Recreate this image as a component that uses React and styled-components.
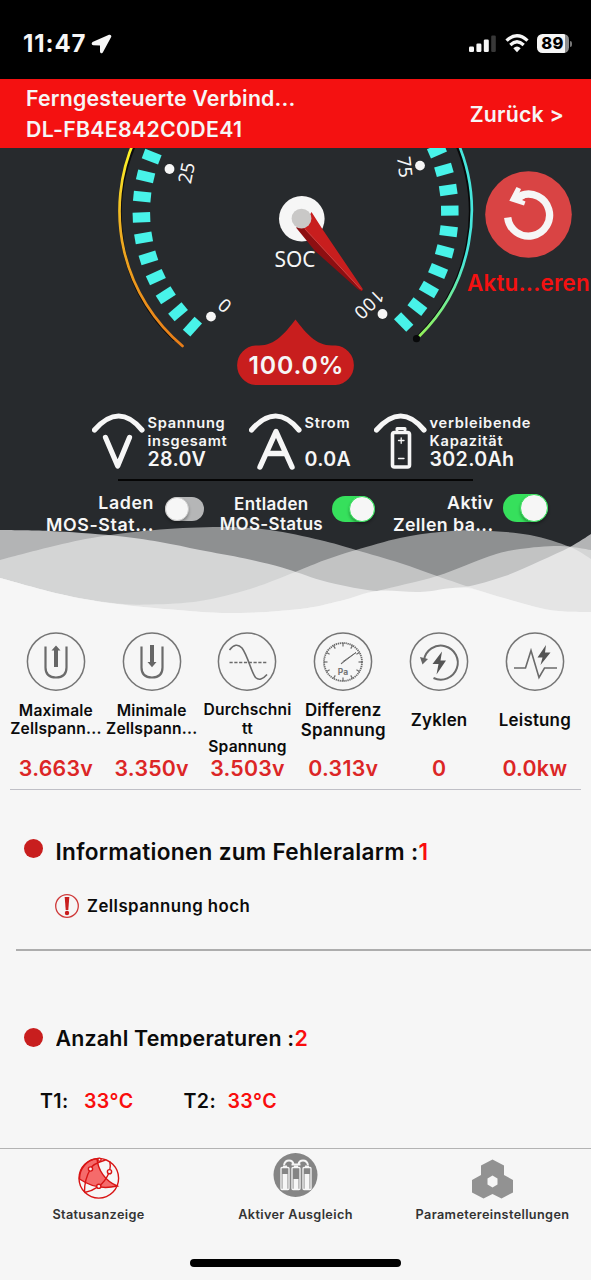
import React from "react";
import styled, { createGlobalStyle } from "styled-components";

const GlobalStyle = createGlobalStyle`
  body {
    margin: 0;
    background: #f6f6f6;
    font-family: Inter, "Liberation Sans", sans-serif;
    font-weight: 600;
  }
`;

const stats = [
  { icon: "max", lines: ["Maximale", "Zellspann..."], size: 15.6, lh: 18.5, value: "3.663v" },
  { icon: "min", lines: ["Minimale", "Zellspann..."], size: 15.6, lh: 18.5, value: "3.350v" },
  { icon: "avg", lines: ["Durchschni", "tt", "Spannung"], size: 15.6, lh: 18.5, drop: 18, value: "3.503v" },
  { icon: "diff", lines: ["Differenz", "Spannung"], size: 16.9, lh: 20.5, value: "0.313v" },
  { icon: "cycle", lines: ["Zyklen"], size: 16.9, lh: 20, value: "0" },
  { icon: "power", lines: ["Leistung"], size: 16.9, lh: 20, value: "0.0kw" }
];

const Screen = styled.div`
  width: 591px;
  height: 1280px;
  display: flex;
  flex-direction: column;
  overflow: hidden;
  background: #f6f6f6;
  color: #0b0b0b;
`;

const StatusBar = styled.div`
  height: 79px;
  box-sizing: border-box;
  padding: 8px 19px 0 23px;
  display: flex;
  align-items: center;
  justify-content: space-between;
  background: #000;
  color: #f6f6f6;
  flex: none;
`;

const StatusGroup = styled.div`
  display: flex;
  align-items: center;
  gap: ${(props) => props.gap}px;
`;

const Clock = styled.span`
  font-size: 24px;
  font-weight: 700;
  letter-spacing: 0.9px;
`;

const BatteryLevel = styled.div`
  width: 32px;
  height: 19px;
  border-radius: 5.5px;
  background: linear-gradient(90deg, #f6f6f6 89%, #8d8d8d 89%);
  color: #000;
  font-size: 16.5px;
  font-weight: 800;
  line-height: 19px;
  text-align: center;
  letter-spacing: 0.2px;
  padding-right: 1px;
  box-sizing: border-box;
`;

const BatteryTip = styled.div`
  width: 2px;
  height: 6px;
  margin-left: 1px;
  border-radius: 0 2px 2px 0;
  background: #777;
`;

const Header = styled.header`
  position: relative;
  z-index: 2;
  height: 69px;
  flex: none;
  box-sizing: border-box;
  padding: 3px 27px 2px 26px;
  display: flex;
  align-items: center;
  justify-content: space-between;
  background: #f41111;
  color: #f6f6f6;
  font-size: 21.3px;
  line-height: 31px;
`;

const HeaderLine = styled.div`
  letter-spacing: ${(props) => props.ls}px;
`;

const Hero = styled.section`
  position: relative;
  height: 466px;
  flex: none;
  background: #272a2d;
  color: #f6f6f6;
`;

const WaveArt = styled.svg`
  position: absolute;
  left: 0;
  top: 372px;
`;

const GaugeRow = styled.div`
  display: flex;
  height: 242px;
  padding-left: 115px;
`;

const GaugeArt = styled.svg`
  overflow: visible;
  flex: none;
`;

const Refresh = styled.div`
  width: 125px;
  padding-top: 23px;
  display: flex;
  flex-direction: column;
  align-items: center;
  gap: 11px;
  color: #f41111;
  font-size: 22.4px;
  line-height: 28px;
  letter-spacing: 0.2px;
`;

const Meters = styled.div`
  display: grid;
  grid-template-columns: 157px 125px 1fr;
  height: 89px;
  box-sizing: border-box;
  padding: 22px 0 0 92px;
`;

const Meter = styled.div`
  display: flex;
`;

const MeterText = styled.div`
  display: flex;
  flex-direction: column;
  justify-content: space-between;
  height: 56px;
  padding: 3px 0 0 0.5px;
  box-sizing: border-box;
`;

const MeterLabel = styled.div`
  font-size: 14.6px;
  line-height: 17.6px;
  letter-spacing: 0.75px;
`;

const MeterValue = styled.div`
  font-size: 19.6px;
  line-height: 17px;
  letter-spacing: 0.35px;
`;

const Rule = styled.div`
  height: ${(props) => props.h || 1}px;
  margin-left: ${(props) => props.left}px;
  margin-right: ${(props) => props.right || 0}px;
  background: ${(props) => props.color};
  flex: none;
`;

const Switches = styled.div`
  position: relative;
  display: grid;
  grid-template-columns: 204px 171px 173px;
  height: 60px;
  padding-top: 11px;
`;

const SwitchItem = styled.div`
  display: flex;
  justify-content: flex-end;
  gap: ${(props) => props.gap}px;
`;

const SwitchText = styled.div`
  padding-top: ${(props) => props.top || 0}px;
  text-align: ${(props) => props.align || "right"};
  font-size: ${(props) => props.size}px;
  line-height: ${(props) => props.lh}px;
  letter-spacing: ${(props) => props.ls}px;
`;

const Track = styled.div`
  width: ${(props) => props.w}px;
  height: ${(props) => props.h}px;
  margin-top: ${(props) => props.top}px;
  display: flex;
  justify-content: ${(props) => (props.$on ? "flex-end" : "flex-start")};
  border-radius: 20px;
  background: ${(props) => (props.$on ? "#36e05c" : "#b5b6b7")};
`;

const Knob = styled.div`
  height: 100%;
  aspect-ratio: 1;
  border: 1px solid ${(props) => (props.$on ? "#36e05c" : "#c9c9c9")};
  box-sizing: border-box;
  border-radius: 50%;
  background: #f6f6f6;
  box-shadow: 0 2px 3px rgba(0, 0, 0, 0.3);
`;

const Stats = styled.section`
  display: grid;
  grid-template-columns: repeat(6, 95.8px);
  padding: 18px 0 0 8px;
  height: 175px;
  box-sizing: border-box;
  flex: none;
`;

const Stat = styled.div`
  display: flex;
  flex-direction: column;
  align-items: center;
`;

const StatLabel = styled.div`
  height: 56px;
  box-sizing: border-box;
  padding-top: ${(props) => props.drop || 0}px;
  display: flex;
  flex-direction: column;
  justify-content: center;
  text-align: center;
  white-space: nowrap;
  font-size: ${(props) => props.size}px;
  line-height: ${(props) => props.lh}px;
  letter-spacing: 0.2px;
`;

const StatValue = styled.div`
  color: #dc2626;
  font-size: 21.3px;
  line-height: 24px;
  margin-top: 8px;
  letter-spacing: 0.25px;
`;

const Block = styled.section`
  height: ${(props) => props.h}px;
  padding-top: ${(props) => props.top}px;
  box-sizing: border-box;
  flex: none;
`;

const Title = styled.div`
  display: flex;
  align-items: center;
  padding-left: 23.5px;
`;

const TitleText = styled.div`
  height: ${(props) => props.h}px;
  line-height: ${(props) => props.h}px;
  overflow: hidden;
  font-size: ${(props) => props.size}px;
  letter-spacing: ${(props) => props.ls}px;
`;

const Bullet = styled.i`
  width: 19px;
  height: 19px;
  margin: -${(props) => props.lift}px 13px 0 0;
  border-radius: 50%;
  background: #c81e1e;
`;

const Red = styled.span`
  color: #f90d0d;
`;

const Alarm = styled.div`
  display: flex;
  align-items: center;
  gap: 7px;
  padding: 26px 0 0 54px;
  font-size: 16.8px;
  line-height: 26px;
  letter-spacing: 0.45px;
`;

const Temps = styled.div`
  display: grid;
  grid-template-columns: 143.5px auto;
  padding: 41px 0 0 40px;
  font-size: 19.6px;
  line-height: 26px;
  letter-spacing: 0.4px;
`;

const Temp = styled.div`
  display: grid;
  grid-template-columns: 44px auto;
`;

const TabBar = styled.nav`
  display: grid;
  grid-template-columns: repeat(3, 197px);
  height: 105px;
  flex: none;
  border-top: 1px solid #b3b3b3;
`;

const Tab = styled.div`
  display: flex;
  flex-direction: column;
  align-items: center;
  gap: 2px;
  padding-top: 3px;
  color: #333;
  font-size: 12.7px;
  line-height: 18px;
  letter-spacing: 0.36px;
`;

const HomeBar = styled.div`
  width: 211px;
  height: 8px;
  flex: none;
  margin: 5px auto 0 190px;
  border-radius: 4px;
  background: #000;
`;

// smooth line through a list of points
function curve(pts) {
  let d = `M${pts[0][0]} ${pts[0][1]}`;
  for (let i = 0; i < pts.length - 1; i++) {
    const a = pts[i - 1] || pts[i];
    const b = pts[i];
    const c = pts[i + 1];
    const e = pts[i + 2] || c;
    d += `C${b[0] + (c[0] - a[0]) / 6} ${b[1] + (c[1] - a[1]) / 6} ${c[0] - (e[0] - b[0]) / 6} ${c[1] - (e[1] - b[1]) / 6} ${c[0]} ${c[1]}`;
  }
  return d + "V620H0Z";
}

const waves = [
  { o: 0.68, pts: [[0, 530], [50, 531], [113, 535.5], [160, 542], [200, 550], [245, 558.5], [282, 567.5], [320, 580], [350, 587], [377, 591], [420, 592], [463, 587.5], [505, 576], [540, 561], [570, 547], [591, 534]] },
  { o: 0.5, pts: [[0, 560], [50, 547], [100, 536.5], [160, 529.5], [222, 527], [270, 530], [320, 540], [356, 550], [400, 563], [437, 576], [466, 586], [500, 597], [550, 610], [591, 612]] },
  { o: 0.5, pts: [[0, 578], [60, 594], [113, 603], [150, 604.5], [200, 601], [250, 589], [295, 572], [325, 560], [356, 550], [400, 538], [440, 532], [480, 530.5], [530, 535], [570, 547], [591, 559]] },
  { o: 0.5, pts: [[0, 578], [60, 594], [113, 603.5], [190, 611], [240, 613], [300, 609], [340, 601], [377, 591], [437, 576], [490, 556], [520, 549], [560, 546], [591, 550]] },
  { o: 1, pts: [[0, 578], [60, 594], [113, 603.5], [190, 611], [240, 613], [300, 609], [340, 601], [377, 591], [420, 592], [463, 587.5], [500, 597], [550, 610], [591, 612]] }
];

function Waves() {
  return (
    <WaveArt width="591" height="100" viewBox="0 520 591 100">
      {waves.map((w, i) => (
        <path key={i} d={curve(w.pts)} fill="#f6f6f6" fillOpacity={w.o} />
      ))}
    </WaveArt>
  );
}

const ticks = [];
for (let k = 0; k < 10; k++) {
  ticks.push(132 + 7.67 * k, 45.5 - 7.67 * k);
}

function Gauge() {
  return (
    <GaugeArt width="351" height="242" viewBox="115 148 351 242">
      <defs>
        <linearGradient id="arcL" x1="0" y1="0" x2="0" y2="1">
          <stop offset="0" stopColor="#ffff28" />
          <stop offset="0.4" stopColor="#f0b323" />
          <stop offset="1" stopColor="#e87d18" />
        </linearGradient>
        <linearGradient id="arcR" x1="0" y1="0" x2="0" y2="1">
          <stop offset="0.6" stopColor="#46e6dc" />
          <stop offset="1" stopColor="#94f25a" />
        </linearGradient>
      </defs>
      <g fill="none" strokeLinecap="round">
        <path d="M137 140A173 173 0 0 0 174 339.500" stroke="#0b0c0d" strokeWidth="3" />
        <path d="M134.500 140A176 176 0 0 0 182.500 346" stroke="url(#arcL)" strokeWidth="2.700" />
        <path d="M454.500 140A174 174 0 0 1 416.500 338" stroke="#08090a" strokeWidth="3" />
        <path d="M456.800 140A176 176 0 0 1 419.500 336" stroke="url(#arcR)" strokeWidth="2.700" />
      </g>
      <circle cx="416.500" cy="338.700" r="3.600" fill="#08090a" />
      {ticks.map((a) => (
        <rect key={a} x="-8.750" y="-5" width="17.500" height="10" fill="#48f3e9"
          transform={`translate(295.600 212) rotate(${a}) translate(154.200 0)`} />
      ))}
      <g fill="#f6f6f6">
        <circle cx="169.500" cy="169" r="4.900" />
        <circle cx="211" cy="316.600" r="4.900" />
        <circle cx="420" cy="165.600" r="4.900" />
        <circle cx="382.500" cy="314" r="4.900" />
        <g fontFamily="Noto Sans" fontSize="18.500" fontWeight="400" textAnchor="middle">
          <text transform="translate(186.500 173) rotate(-79)" y="6.500">25</text>
          <text transform="translate(224.800 305.500) rotate(-139)" y="6.500">0</text>
          <text transform="translate(404.800 167) rotate(83)" y="6.500">75</text>
          <text transform="translate(369 304.500) rotate(136)" y="6.500" letterSpacing="0.500">100</text>
          <text x="295" y="267" fontSize="22.500" textLength="41" lengthAdjust="spacingAndGlyphs">SOC</text>
        </g>
        <circle cx="301.800" cy="218.800" r="22.800" />
      </g>
      <path d="M296 227.500L315 251L357 288.500Q361 292 362.300 290.500L303 226Z" fill="#8d0f12" />
      <path d="M303 227L311.500 212L323 230L362.500 288.500Q363 291 361.500 290.500Z" fill="#c81e1e" />
      <path d="M305 229L360.500 289" stroke="#c94848" strokeWidth="0.900" />
      <circle cx="301.500" cy="218.600" r="9.900" fill="#c9c8c7" />
      <path d="M255.500 345.500H258C275 346 285 333 295.500 319.500C306 333 316 346 333 345.500H335.500A19.800 19.800 0 0 1 335.500 385H255.500A19.800 19.800 0 0 1 255.500 345.500Z" fill="#c81e1e" />
      <text x="296" y="374" textAnchor="middle" fontSize="24.800" fontWeight="600" fill="#f6f6f6" textLength="95">100.0%</text>
    </GaugeArt>
  );
}

function MeterIcon({ kind }) {
  return (
    <svg width="55" height="60" viewBox="0 0 55 60" fill="none" stroke="#f6f6f6" strokeLinecap="round" strokeLinejoin="round">
      <path d="M2.500 18Q27 -10 50 18" strokeWidth="5.200" />
      {kind === "V" && <path d="M13.500 25.500L25.700 54L37.500 25.500" strokeWidth="5.200" />}
      {kind === "A" && <path d="M11 55L27 19.500L43 55M18 41.500H36" strokeWidth="5.400" />}
      {kind === "Ah" && (
        <>
          <rect x="18.500" y="20.500" width="17" height="34.500" rx="2" strokeWidth="3.600" />
          <path d="M23 18V16.500H31V18" strokeWidth="3" />
          <path d="M24.500 28.500H30M27.200 25.800V31.300M24.500 46.500H30" strokeWidth="1.300" />
        </>
      )}
    </svg>
  );
}

const minutes = Array.from({ length: 12 }, (_, i) => i * 30);

function StatIcon({ kind }) {
  return (
    <svg width="60" height="60" viewBox="0 0 60 60" fill="none" stroke="#6b6b6b" strokeWidth="1.600">
      <circle cx="30" cy="29.600" r="28.600" strokeWidth="1.500" stroke="#757575" />
      {(kind === "max" || kind === "min") && (
        <path d="M19.500 14.500V35.500Q19.500 45.500 30 45.500Q40.500 45.500 40.500 35.500V14.500" strokeWidth="2.200" />
      )}
      {kind === "max" && <path d="M28 35V18.500H25.500L30 13.500L34.500 18.500H32V35Z" fill="#666" stroke="none" />}
      {kind === "min" && <path d="M28 13V30H25.500L30 35.200L34.500 30H32V13Z" fill="#666" stroke="none" />}
      {kind === "avg" && (
        <>
          <path d="M12.500 18Q19 9.500 25 16C31 24 34 40 38.500 45.500Q43.500 50 50 42.500" />
          <path d="M12.500 30.500H50" strokeDasharray="3.200 1.600" strokeWidth="1.300" />
        </>
      )}
      {kind === "diff" && (
        <>
          <circle cx="30" cy="30" r="19" strokeWidth="1.800" strokeDasharray="1.300 0.690" />
          {minutes.map((a) => (
            <path key={a} d="M30 11V14.500" strokeWidth="1.200" transform={`rotate(${a} 30 30)`} />
          ))}
          <path d="M28 32L43 20.500L30 29.500Z" strokeWidth="1" />
          <text x="30" y="42.500" fontSize="8.500" fontWeight="700" textAnchor="middle" fill="#777" stroke="none">Pa</text>
        </>
      )}
      {kind === "cycle" && (
        <>
          <path d="M15 28A17 17 0 1 1 24.500 46" strokeWidth="2" />
          <path d="M11 25L19 27L13.500 32.500Z" fill="#666" stroke="none" />
          <path d="M33 19.500L23.500 32H29.500L27.500 42.500L37 28.500H31.500Z" fill="#555" stroke="none" />
        </>
      )}
      {kind === "power" && (
        <>
          <path d="M9 36H20.500L26 18.500L34 45.500L39.500 36H52" />
          <path d="M41 13L32.500 25.500H37.500L35.500 33L45.500 20.500H40Z" fill="#555" stroke="none" />
        </>
      )}
    </svg>
  );
}

function StatusIcon() {
  return (
    <svg width="48" height="52" viewBox="0 0 48 52" fill="none" stroke="#d81414" strokeWidth="1.400">
      <path d="M22 6.600C23 18 30 29 42.200 34Q22 39 4.500 27A20 20 0 0 1 22 6.600Z" fill="#f56b6b" />
      <circle cx="23.800" cy="26.300" r="19.800" />
      <path d="M30.500 8Q17 12 15.500 17Q9.500 27 9.500 39.700M34.800 9.500Q36 14 34.500 19.700Q30 30 23.800 34.300Q17 39 9.500 40.500" />
      <g fill="#f6f6f6">
        <circle cx="24.500" cy="7.700" r="1.600" />
        <circle cx="15.500" cy="17" r="2.100" />
        <circle cx="34.500" cy="19.700" r="2.100" />
        <circle cx="23.800" cy="34.300" r="2.100" />
      </g>
    </svg>
  );
}

function BalanceIcon() {
  return (
    <svg width="48" height="52" viewBox="0 0 48 52">
      <circle cx="23.500" cy="23" r="22" fill="#858585" />
      <g fill="#858585" stroke="#f6f6f6" strokeWidth="1.300">
        <rect x="9" y="15.500" width="8" height="22" rx="1" />
        <rect x="20" y="15.500" width="8" height="22" rx="1" />
        <rect x="31" y="15.500" width="8" height="22" rx="1" />
      </g>
      <path d="M10.500 22H15.500V37H10.500ZM21.500 27H26.500V37H21.500ZM32.500 22H37.500V37H32.500ZM11 13.500H15V15.500H11ZM22 13.500H26V15.500H22ZM33 13.500H37V15.500H33Z" fill="#f6f6f6" />
      <path d="M12 13Q13 8.500 17 8.500Q21 8.500 21.500 12.500M26.500 12.500Q27 8.500 31 8.500Q35 8.500 36 13M19.500 12.500H28.500" fill="none" stroke="#f6f6f6" strokeWidth="2" />
    </svg>
  );
}

function ParamIcon() {
  return (
    <svg width="48" height="52" viewBox="0 0 48 52">
      <path d="M23.500 7.500L35 13.500V23L44 28V40.500L32.500 46.500L23.500 42L14.500 46.500L3 40.500V28L12 23V13.500Z" fill="#929292" />
      <path d="M23.500 23.500L28.500 26.500V32.500L23.500 35.500L18.500 32.500V26.500Z" fill="#f6f6f6" />
    </svg>
  );
}

function Toggle({ on, w, h, top }) {
  return (
    <Track $on={on} w={w} h={h} top={top}>
      <Knob $on={on} />
    </Track>
  );
}

export default function App() {
  return (
    <Screen>
      <GlobalStyle />
      <StatusBar>
        <StatusGroup gap={5}>
          <Clock>11:47</Clock>
          <svg width="21" height="20" viewBox="0 0 21 20">
            <path d="M18 0.800L1.500 8Q-0.500 10.300 2.300 11.300L9 11.500V17.800Q9.800 20.500 11.800 18.400L20.300 2.700Q20.500 0.300 18 0.800Z" fill="#f6f6f6" />
          </svg>
        </StatusGroup>
        <StatusGroup gap={8}>
          <svg width="28" height="19" viewBox="0 0 28 19" fill="#f6f6f6">
            <rect x="0" y="12.500" width="5" height="5.500" rx="1.300" />
            <rect x="7.400" y="9.500" width="5" height="8.500" rx="1.300" />
            <rect x="14.800" y="5.500" width="5" height="12.500" rx="1.300" />
            <rect x="22.200" y="1.500" width="4.600" height="16.500" rx="1.300" fill="#383838" />
          </svg>
          <svg width="24" height="19" viewBox="0 0 24 19" fill="none" stroke="#f6f6f6" strokeWidth="3.200">
            <path d="M1.500 6.700Q12 -3.200 22.500 6.700" />
            <path d="M5.300 11Q12 4.600 18.700 11" />
            <path d="M12 18.300L8.300 14.300Q12 10.900 15.700 14.300Z" fill="#f6f6f6" stroke="none" />
          </svg>
          <StatusGroup gap={0}>
            <BatteryLevel>89</BatteryLevel>
            <BatteryTip />
          </StatusGroup>
        </StatusGroup>
      </StatusBar>
      <Header>
        <div>
          <HeaderLine ls={0.2}>Ferngesteuerte Verbind...</HeaderLine>
          <HeaderLine ls={0.3}>DL-FB4E842C0DE41</HeaderLine>
        </div>
        <HeaderLine ls={0.2}>Zurück &gt;</HeaderLine>
      </Header>
      <Hero>
        <Waves />
        <GaugeRow>
          <Gauge />
          <Refresh>
            <svg width="87" height="87" viewBox="0 0 87 87">
              <circle cx="43.500" cy="43.500" r="43.300" fill="#d94444" />
              <path d="M22.700 46.500A21 21 0 1 0 36 24.500" fill="none" stroke="#f6f6f6" strokeWidth="7.300" />
              <path d="M31.500 16L24.300 29.800L39 34.500L40.500 30.500L37 29L42 26V20L34.500 21.500L36 18Z" fill="#f6f6f6" />
            </svg>
            Aktu...eren
          </Refresh>
        </GaugeRow>
        <Meters>
          <Meter>
            <MeterIcon kind="V" />
            <MeterText>
              <MeterLabel>Spannung<br />insgesamt</MeterLabel>
              <MeterValue>28.0V</MeterValue>
            </MeterText>
          </Meter>
          <Meter>
            <MeterIcon kind="A" />
            <MeterText>
              <MeterLabel>Strom</MeterLabel>
              <MeterValue>0.0A</MeterValue>
            </MeterText>
          </Meter>
          <Meter>
            <MeterIcon kind="Ah" />
            <MeterText>
              <MeterLabel>verbleibende<br />Kapazität</MeterLabel>
              <MeterValue>302.0Ah</MeterValue>
            </MeterText>
          </Meter>
        </Meters>
        <Rule h={2} left={118} right={118} color="#050505" />
        <Switches>
          <SwitchItem gap={11}>
            <SwitchText size={17.8} lh={21.5} ls={0.6}>Laden<br />MOS-Stat...</SwitchText>
            <Toggle w={39} h={24} top={5} />
          </SwitchItem>
          <SwitchItem gap={9}>
            <SwitchText size={17} lh={20.5} ls={0.3} top={1.5} align="center">Entladen<br />MOS-Status</SwitchText>
            <Toggle on w={43} h={26} top={4} />
          </SwitchItem>
          <SwitchItem gap={9}>
            <SwitchText size={17.8} lh={21.5} ls={0.4}>Aktiv<br />Zellen ba...</SwitchText>
            <Toggle on w={45.5} h={28} top={2} />
          </SwitchItem>
        </Switches>
      </Hero>
      <Stats>
        {stats.map((s) => (
          <Stat key={s.icon}>
            <StatIcon kind={s.icon} />
            <StatLabel size={s.size} lh={s.lh} drop={s.drop}>
              {s.lines.map((l) => (
                <div key={l}>{l}</div>
              ))}
            </StatLabel>
            <StatValue>{s.value}</StatValue>
          </Stat>
        ))}
      </Stats>
      <Rule h={1} left={10} right={10} color="#bfbfc6" />
      <Block h={159} top={47}>
        <Title>
          <Bullet lift={7} />
          <TitleText h={30} size={22.6} ls={0.3}>
            Informationen zum Fehleralarm :<Red>1</Red>
          </TitleText>
        </Title>
        <Alarm>
          <svg width="26" height="26" viewBox="0 0 26 26" fill="none" stroke="#cf3a3a">
            <circle cx="13" cy="13" r="11.300" strokeWidth="1.300" />
            <path d="M10.700 4H15.300L14.300 17H11.700Z" fill="#c81e1e" stroke="none" />
            <circle cx="13" cy="20" r="2.200" fill="#c81e1e" stroke="none" />
          </svg>
          Zellspannung hoch
        </Alarm>
      </Block>
      <Rule h={1.5} left={16} color="#adadad" />
      <Block h={197.5} top={78}>
        <Title>
          <Bullet lift={1} />
          <TitleText h={18} size={21.4} ls={0.2}>
            Anzahl Temperaturen :<Red>2</Red>
          </TitleText>
        </Title>
        <Temps>
          <Temp>T1:<Red>33°C</Red></Temp>
          <Temp>T2:<Red>33°C</Red></Temp>
        </Temps>
      </Block>
      <TabBar>
        <Tab>
          <StatusIcon />
          <span>Statusanzeige</span>
        </Tab>
        <Tab>
          <BalanceIcon />
          <span>Aktiver Ausgleich</span>
        </Tab>
        <Tab>
          <ParamIcon />
          <span>Parametereinstellungen</span>
        </Tab>
      </TabBar>
      <HomeBar />
    </Screen>
  );
}
